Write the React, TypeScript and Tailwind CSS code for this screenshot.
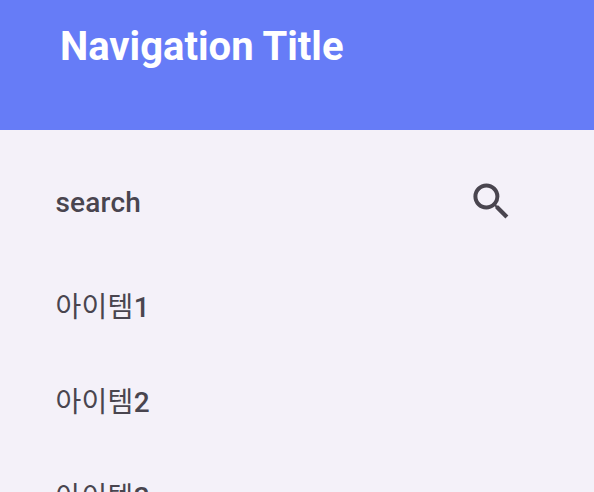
import React from "react";

const items = ["1", "2", "3"];

export default function App() {
  return (
    <div className="h-[492px] w-[594px] overflow-hidden bg-[#f4f1f9] font-['Roboto','Noto_Sans_CJK_KR',sans-serif] text-[#49454f]">
      <header className="h-[130px] bg-[#667cf7] pl-[60px] pt-[23px]">
        <h1 className="text-[40px] font-bold leading-[48px] text-white">Navigation Title</h1>
      </header>
      <nav>
        <div className="flex h-[130px] items-start justify-between pl-[55.5px] pr-[79px] pt-[47px]">
          <span className="pt-[10px] text-[28px] font-medium leading-[32px] tracking-[0.2px]">search</span>
          <svg viewBox="-0.2 -0.25 24 24" className="h-[48px] w-[48px]" fill="currentColor">
            <path d="M15.5 14h-.79l-.28-.27A6.47 6.47 0 0 0 16 9.5 6.5 6.5 0 1 0 9.5 16c1.61 0 3.09-.59 4.23-1.57l.27.28v.79l5 4.99L20.49 19l-4.99-5zm-6 0C7.01 14 5 11.99 5 9.5S7.01 5 9.5 5 14 7.01 14 9.5 11.99 14 9.5 14z" />
          </svg>
        </div>
        <ul>
          {items.map((n) => (
            <li key={n} className="flex h-[95px] items-center pl-[55.5px] text-[28px] leading-[40px] tracking-[0.3px]">
              <span>아이템</span>
              <span className="font-medium">{n}</span>
            </li>
          ))}
        </ul>
      </nav>
    </div>
  );
}
